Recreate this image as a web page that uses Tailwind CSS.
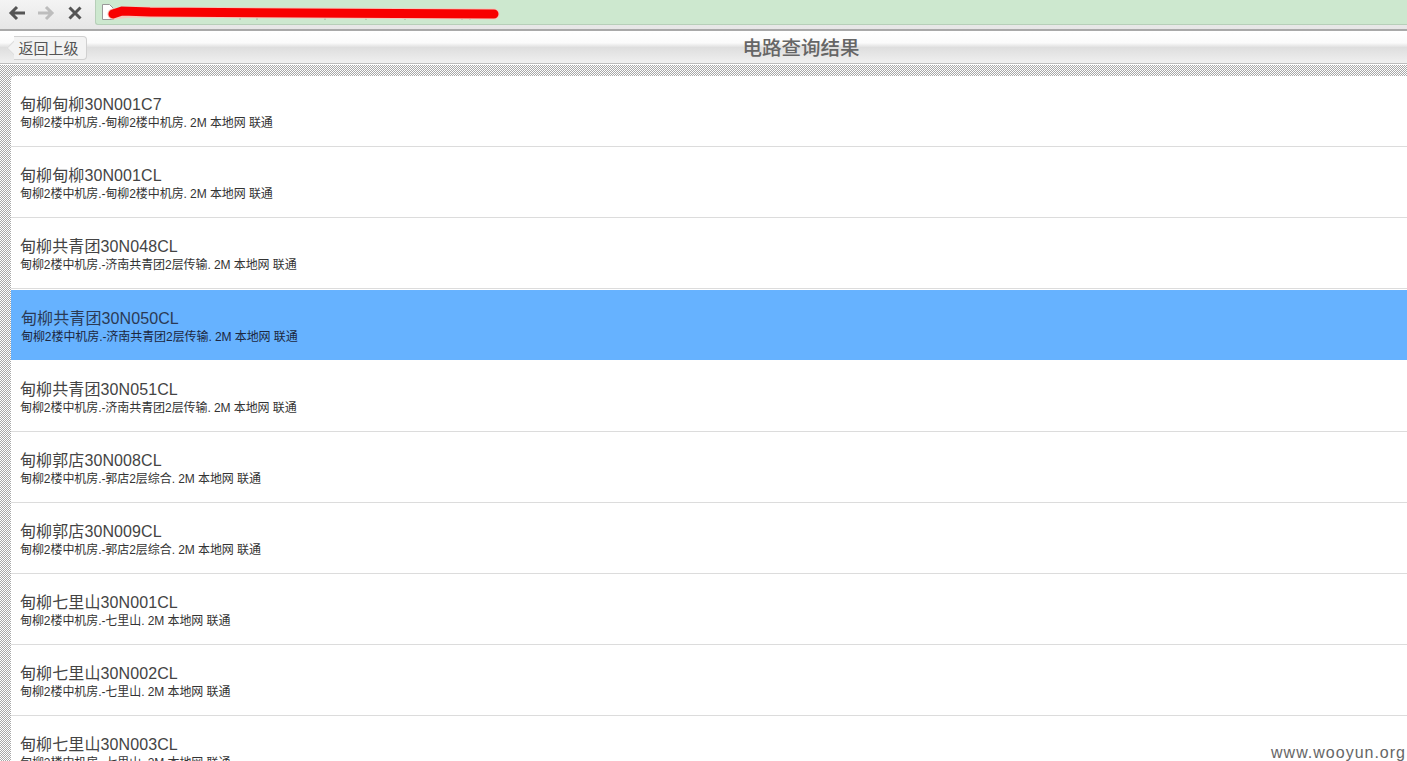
<!DOCTYPE html>
<html lang="zh-CN">
<head>
  <meta charset="UTF-8" />
  <title>电路查询结果</title>
  <script src="https://cdn.jsdelivr.net/npm/@tailwindcss/browser@4"></script>
</head>
<body class="h-[761px] w-[1407px] overflow-hidden relative bg-white font-['Liberation_Sans','Noto_Sans_CJK_SC',sans-serif]">
  <!-- browser toolbar -->
  <div class="h-[31px] flex items-start bg-gradient-to-b from-[#f4f4f4] to-[#e6e6e6] border-b-2 border-[#a9a9a9] relative">
    <div class="w-[95px] h-[26px] flex items-center shrink-0 pl-[8px] gap-[11px]">
      <svg width="18" height="16" viewBox="0 0 18 16" fill="none" stroke="#555" stroke-width="3"><path d="M17 8H3M9 2 3 8l6 6"/></svg>
      <svg width="18" height="16" viewBox="0 0 18 16" fill="none" stroke="#bdbdbd" stroke-width="3"><path d="M1 8h14M9 2l6 6-6 6"/></svg>
      <svg width="14" height="14" viewBox="0 0 14 14" fill="none" stroke="#555" stroke-width="3" class="ml-[2px]"><path d="M1.500 1.500l11 11M12.500 1.500l-11 11"/></svg>
    </div>
    <div class="flex-1 h-[25px] bg-[#cde8cf] border-l border-b border-[#b7cfb9] rounded-bl-[3px] flex items-center pl-[6px]">
      <svg width="12" height="16" viewBox="0 0 12 16"><path d="M.500.500h7l4 4v11h-11z" fill="#fff" stroke="#999"/></svg>
    </div>
    <!-- url scribbled out -->
    <svg class="absolute left-0 top-0" width="510" height="26" viewBox="0 0 510 26" fill="none">
      <path d="M240 14v6M257 14v6M325 14v6M366 14v6M405 14v6M462 14v6M470 14v6" stroke="#9fb3a1"/>
      <path d="M113 14 130 12 300 13 494 14" stroke="#f3c8bd" stroke-width="11" stroke-linecap="round"/>
      <path d="M113 14 122 11 150 12 300 13 494 14" stroke="#f80000" stroke-width="9" stroke-linecap="round"/>
    </svg>
  </div>

  <!-- nav bar -->
  <div class="h-[32px] mt-px relative flex items-center justify-center border-b border-[#bdbdbd] bg-[linear-gradient(#fff_0%,#fbfbfb_35%,#dedede_50%,#f0f0f0_100%)]">
    <div class="absolute left-[9px] top-[10px] w-[12px] h-[12px] rotate-45 bg-[#f3f3f3] border-l border-b border-[#dcdcdc]"></div>
    <a class="absolute left-[14px] top-[4px] h-[24px] w-[73px] flex items-center justify-center text-[15px] text-[#555] bg-[#f3f3f3] border border-l-0 border-[#d0d0d0] rounded-r-[4px] pt-[2px] pr-[3px]">返回上级</a>
    <h1 class="pl-[195px] pt-[2px] text-[19.500px] font-medium text-[#666] leading-none">电路查询结果</h1>
  </div>

  <!-- list on checker background -->
  <div class="mt-px h-[700px] pl-[11px] pt-[11px] relative">
    <svg class="absolute inset-0" width="1407" height="700" shape-rendering="crispEdges">
      <defs><pattern id="checker" width="2" height="2" patternUnits="userSpaceOnUse"><rect width="2" height="2" fill="#fff"/><rect width="1" height="1" fill="#a8a8a8"/><rect x="1" y="1" width="1" height="1" fill="#a8a8a8"/></pattern></defs>
      <rect width="1407" height="700" fill="url(#checker)"/>
    </svg>
    <div class="relative bg-white rounded-tl-[4px] h-full text-[#444]">
      <div class="h-[71px] pl-[9px] pt-[19px] border-b border-[#dcdcdc]"><p class="text-[16px] leading-[19px] tracking-[0.1px]">甸柳甸柳30N001C7</p><p class="text-[12px] leading-[15px] mt-[2px] text-[#333] tracking-[-0.07px]">甸柳2楼中机房.-甸柳2楼中机房. 2M 本地网 联通</p></div>
      <div class="h-[71px] pl-[9px] pt-[19px] border-b border-[#dcdcdc]"><p class="text-[16px] leading-[19px] tracking-[0.1px]">甸柳甸柳30N001CL</p><p class="text-[12px] leading-[15px] mt-[2px] text-[#333] tracking-[-0.07px]">甸柳2楼中机房.-甸柳2楼中机房. 2M 本地网 联通</p></div>
      <div class="h-[71px] pl-[9px] pt-[19px] border-b border-[#dcdcdc]"><p class="text-[16px] leading-[19px] tracking-[0.1px]">甸柳共青团30N048CL</p><p class="text-[12px] leading-[15px] mt-[2px] text-[#333] tracking-[-0.07px]">甸柳2楼中机房.-济南共青团2层传输. 2M 本地网 联通</p></div>
      <div class="h-[70px] mt-px pl-[10px] pt-[19px] bg-[#66b2ff] text-[#2b3a55]"><p class="text-[16px] leading-[19px] tracking-[0.1px]">甸柳共青团30N050CL</p><p class="text-[12px] leading-[15px] mt-[2px] text-[#1c2740] tracking-[-0.07px]">甸柳2楼中机房.-济南共青团2层传输. 2M 本地网 联通</p></div>
      <div class="h-[72px] pl-[9px] pt-[20px] border-b border-[#dcdcdc]"><p class="text-[16px] leading-[19px] tracking-[0.1px]">甸柳共青团30N051CL</p><p class="text-[12px] leading-[15px] mt-[2px] text-[#333] tracking-[-0.07px]">甸柳2楼中机房.-济南共青团2层传输. 2M 本地网 联通</p></div>
      <div class="h-[71px] pl-[9px] pt-[19px] border-b border-[#dcdcdc]"><p class="text-[16px] leading-[19px] tracking-[0.1px]">甸柳郭店30N008CL</p><p class="text-[12px] leading-[15px] mt-[2px] text-[#333] tracking-[-0.07px]">甸柳2楼中机房.-郭店2层综合. 2M 本地网 联通</p></div>
      <div class="h-[71px] pl-[9px] pt-[19px] border-b border-[#dcdcdc]"><p class="text-[16px] leading-[19px] tracking-[0.1px]">甸柳郭店30N009CL</p><p class="text-[12px] leading-[15px] mt-[2px] text-[#333] tracking-[-0.07px]">甸柳2楼中机房.-郭店2层综合. 2M 本地网 联通</p></div>
      <div class="h-[71px] pl-[9px] pt-[19px] border-b border-[#dcdcdc]"><p class="text-[16px] leading-[19px] tracking-[0.1px]">甸柳七里山30N001CL</p><p class="text-[12px] leading-[15px] mt-[2px] text-[#333] tracking-[-0.07px]">甸柳2楼中机房.-七里山. 2M 本地网 联通</p></div>
      <div class="h-[71px] pl-[9px] pt-[19px] border-b border-[#dcdcdc]"><p class="text-[16px] leading-[19px] tracking-[0.1px]">甸柳七里山30N002CL</p><p class="text-[12px] leading-[15px] mt-[2px] text-[#333] tracking-[-0.07px]">甸柳2楼中机房.-七里山. 2M 本地网 联通</p></div>
      <div class="h-[71px] pl-[9px] pt-[19px]"><p class="text-[16px] leading-[19px] tracking-[0.1px]">甸柳七里山30N003CL</p><p class="text-[12px] leading-[15px] mt-[2px] text-[#333] tracking-[-0.07px]">甸柳2楼中机房.-七里山. 2M 本地网 联通</p></div>
    </div>
  </div>

  <div class="absolute right-[1px] top-[743px] text-[16px] leading-[20px] font-['Liberation_Sans',sans-serif] text-[#666] tracking-[1px]">www.wooyun.org</div>
</body>
</html>
